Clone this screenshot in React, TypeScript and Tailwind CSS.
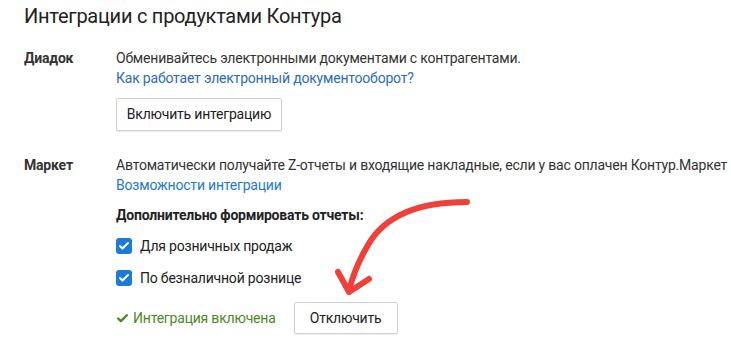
import { Check } from "lucide-react";

const rowLabel = "w-[92px] shrink-0 font-bold text-[#333] leading-5";

function Checkbox({ label }: { label: string }) {
  return (
    <label className="flex items-center gap-2 h-5">
      <span className="flex h-4 w-4 items-center justify-center rounded-[3px] bg-[#1d7ad9]">
        <Check className="h-3 w-3 text-white" strokeWidth={4} />
      </span>
      <span className="text-[#222]">{label}</span>
    </label>
  );
}

export default function App() {
  return (
    <div className="relative w-[731px] h-[345px] overflow-hidden bg-white px-6 pt-[3px] text-[14px] tracking-[-0.2px] text-[#333] font-['Roboto','Liberation_Sans',sans-serif]">
      <h1 className="text-[20px] leading-[26px] tracking-[-0.25px] text-[#222]">
        Интеграции с продуктами Контура
      </h1>

      {/* Диадок */}
      <div className="mt-[19px] flex">
        <div className={rowLabel}>Диадок</div>
        <div className="flex flex-col items-start">
          <p className="leading-5">
            Обменивайтесь электронными документами с контрагентами.
          </p>
          <a className="leading-5 text-[#2b6cba]">
            Как работает электронный документооборот?
          </a>
          <button className="mt-[10px] h-[33px] w-[166px] rounded-[2px] border border-[#d0d0d0] bg-white text-[#222] shadow-[0_1px_1px_rgba(0,0,0,0.08)]">
            Включить интеграцию
          </button>
        </div>
      </div>

      {/* Маркет */}
      <div className="mt-[24px] flex">
        <div className={rowLabel}>Маркет</div>
        <div className="flex flex-col items-start">
          <p className="leading-5 whitespace-nowrap">
            Автоматически получайте Z-отчеты и входящие накладные, если у вас
            оплачен Контур.Маркет
          </p>
          <a className="leading-5 text-[#1f78d1]">Возможности интеграции</a>
          <p className="mt-[10px] font-bold text-[#222] leading-5">
            Дополнительно формировать отчеты:
          </p>
          <div className="mt-[11px] flex flex-col gap-3">
            <Checkbox label="Для розничных продаж" />
            <Checkbox label="По безналичной рознице" />
          </div>
          <div className="mt-[14px] flex items-center gap-[18px]">
            <span className="flex items-center gap-1 text-[#4b8a23]">
              <Check className="h-[13px] w-[13px]" strokeWidth={4.5} />
              Интеграция включена
            </span>
            <button className="h-[32px] w-[104px] rounded-[2px] border border-[#d0d0d0] bg-white text-[#222] shadow-[0_1px_1px_rgba(0,0,0,0.08)]">
              Отключить
            </button>
          </div>
        </div>
      </div>

      {/* annotation arrow */}
      <svg
        className="pointer-events-none absolute left-0 top-0"
        width="731"
        height="345"
        viewBox="0 0 731 345"
        fill="none"
      >
        <path
          d="M467 202 C 420 202, 385 215, 368 245 C 358 262, 352 278, 349 291"
          stroke="#f0403a"
          strokeWidth="6"
          strokeLinecap="round"
        />
        <path
          d="M338 272 L349 292 L369 279"
          stroke="#f0403a"
          strokeWidth="6"
          strokeLinecap="round"
          strokeLinejoin="round"
        />
      </svg>
    </div>
  );
}
